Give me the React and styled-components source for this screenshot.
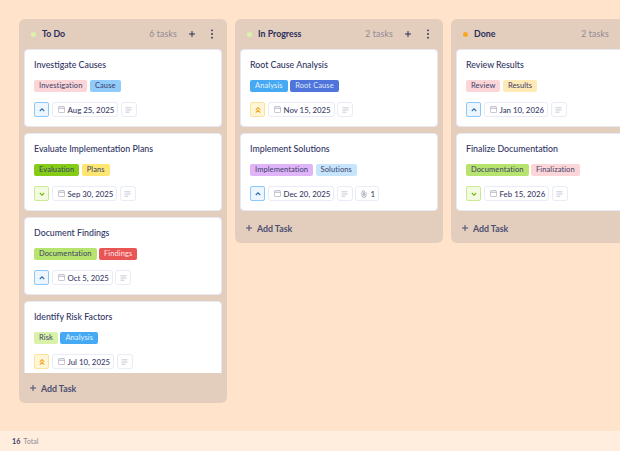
import React from "react";
import styled, { createGlobalStyle } from "styled-components";

const Global = createGlobalStyle`
  html, body { margin: 0; padding: 0; }
  body { font-family: "Lato", "Liberation Sans", sans-serif; background: #ffe3cb; }
  * { box-sizing: border-box; }
`;

const Page = styled.div`
  width: 620px; height: 451px; display: flex; flex-direction: column; overflow: hidden; background: #ffe3cb;
`;
const Board = styled.div`
  flex: 1; min-height: 0; display: flex; align-items: flex-start; gap: 8px; padding: 19px 0 0 19px; overflow: hidden;
`;
const Column = styled.section`
  flex: 0 0 208px; max-height: 384px; display: flex; flex-direction: column; background: #e3cdbd; border-radius: 6px; padding: 0 5px;
`;
const ColumnHeader = styled.header`
  height: 30px; flex: none; display: flex; align-items: center; padding: 0 5px 0 7px; color: #2b2f5b;
`;
const Dot = styled.span`
  width: 5px; height: 5px; border-radius: 50%; background: ${p => p.$color}; margin-right: 6px;
`;
const ColumnTitle = styled.h2`
  margin: 0 0 1px; font-size: 8.8px; font-weight: 700; flex: 1; color: #2b2f5b;
`;
const Count = styled.span`
  font-size: 8.6px; color: #8d8a94; margin-right: 10px; letter-spacing: .2px; margin-bottom: 1px;
`;
const HeaderIcon = styled.svg`
  width: 10px; height: 10px; flex: none; margin-left: ${p => p.$ml || 0}px; margin-bottom: 1px; color: #2b2f5b;
`;
const Cards = styled.div`
  flex: 0 1 auto; min-height: 0; overflow: hidden; display: flex; flex-direction: column; gap: 6px; padding-bottom: 2px;
`;
const Card = styled.article`
  flex: none; height: 78px; background: #fff; border: 1px solid #e6e8f6; border-radius: 4px; padding: 9px 9px 0;
`;
const CardTitle = styled.h3`
  margin: 0; height: 11px; font-size: 8.8px; line-height: 11px; font-weight: 500; color: #2f3463; white-space: nowrap;
`;
const Tags = styled.div`
  display: flex; gap: 2.5px; margin-top: 10px;
`;
const Tag = styled.span`
  height: 12px; padding: 0 5px; border-radius: 2px; font-size: 7.5px; line-height: 12px; font-weight: 400; white-space: nowrap; letter-spacing: .1px;
  background: ${p => p.$bg}; color: ${p => p.$fg || "#3a3e68"};
`;
const Meta = styled.div`
  display: flex; gap: 2.5px; margin-top: 10px;
`;
const Chip = styled.span`
  height: 15px; display: inline-flex; align-items: center; gap: 3px; padding: 0 3px 0 5px; border: 1px solid #e9ebf7; border-radius: 3px;
  background: #fff; font-size: 7.85px; font-weight: 500; color: #3a3e68; white-space: nowrap;
`;
const Priority = styled.span`
  width: 15px; height: 15px; display: inline-flex; align-items: center; justify-content: center; border-radius: 2px;
  border: 1px solid ${p => p.$border}; background: ${p => p.$bg}; color: ${p => p.$color};
`;
const Lines = styled.span`
  width: 16px; height: 15px; display: inline-flex; align-items: center; justify-content: center; border: 1px solid #e9ebf7; border-radius: 3px; color: #b9bbca;
`;
const AddRow = styled.div`
  height: 30px; flex: none; display: flex; align-items: center; gap: 3px; padding-left: 4px; font-size: 8.8px; font-weight: 700; color: #4a4d70;
`;
const Footer = styled.footer`
  height: 20px; flex: none; display: flex; align-items: center; gap: 3px; padding-left: 12px; background: #ffeddd; font-size: 7.2px; color: #8f8e9e;
`;
const FooterNum = styled.b`
  font-weight: 700; color: #3a3e68;
`;

const Plus = ({ ml }) => (
  <HeaderIcon $ml={ml} viewBox="0 0 10 10" fill="none" stroke="currentColor" strokeWidth="1"><path d="M5 2v6M2 5h6" /></HeaderIcon>
);
const Kebab = ({ ml }) => (
  <HeaderIcon $ml={ml} viewBox="0 0 10 10" fill="currentColor"><circle cx="5" cy="1.3" r=".9" /><circle cx="5" cy="5" r=".9" /><circle cx="5" cy="8.7" r=".9" /></HeaderIcon>
);
const Cal = () => (
  <svg width="7" height="7" viewBox="0 0 7 7" fill="none" stroke="#a9abbd" strokeWidth=".7"><rect x=".4" y=".7" width="6.2" height="5.9" rx=".7" /><path d="M.4 2.4h6.2M2 .1v1.2M5 .1v1.2" /></svg>
);
const LinesIcon = () => (
  <svg width="7" height="6" viewBox="0 0 7 6" fill="none" stroke="currentColor" strokeWidth=".8"><path d="M.5 .8h6M.5 3h6M.5 5.2h3.8" /></svg>
);
const Clip = () => (
  <svg width="6" height="8" viewBox="0 0 6 8" fill="none" stroke="#a9abbd" strokeWidth=".9"><path d="M5 2.5v3a2 2 0 0 1-4 0V2a1.3 1.3 0 0 1 2.6 0v3.2a.6.6 0 0 1-1.2 0V2.5" /></svg>
);

const PRIORITY = {
  up: { border: "#8cc8f8", bg: "#edf6fe", color: "#2f6fb0", d: "M1.8 5L4 2.8 6.2 5" },
  down: { border: "#c8eb94", bg: "#f2fbdf", color: "#74b81e", d: "M1.8 3L4 5.2 6.2 3" },
  high: { border: "#fde39a", bg: "#fff6d8", color: "#f5a623", d: "M1.8 3.8L4 1.6 6.2 3.8M1.8 6.6L4 4.4 6.2 6.6" },
};
const PriorityBadge = ({ level }) => {
  const p = PRIORITY[level];
  return (
    <Priority $border={p.border} $bg={p.bg} $color={p.color}>
      <svg width="8" height="8" viewBox="0 0 8 8" fill="none" stroke="currentColor" strokeWidth="1.1"><path d={p.d} /></svg>
    </Priority>
  );
};

const T = {
  pink: { $bg: "#fcd5d8" }, sky: { $bg: "#90cbfa" }, green: { $bg: "#84cc16" }, yellow: { $bg: "#ffe672" },
  lime: { $bg: "#b7e36f" }, red: { $bg: "#e95454", $fg: "#fde8e8" }, pale: { $bg: "#d8f2a9" }, blue: { $bg: "#45a9f4", $fg: "#e4f3fe" },
  indigo: { $bg: "#4f74dc", $fg: "#dfe7fb" }, purple: { $bg: "#e0b4f8" }, ice: { $bg: "#c6e5fc" }, cream: { $bg: "#ffe9b5" },
};

const columns = [
  { title: "To Do", dot: "#d9f2a9", count: "6 tasks", cards: [
    { title: "Investigate Causes", tags: [["Investigation", T.pink], ["Cause", T.sky]], p: "up", date: "Aug 25, 2025" },
    { title: "Evaluate Implementation Plans", tags: [["Evaluation", T.green], ["Plans", T.yellow]], p: "down", date: "Sep 30, 2025" },
    { title: "Document Findings", tags: [["Documentation", T.lime], ["Findings", T.red]], p: "up", date: "Oct 5, 2025" },
    { title: "Identify Risk Factors", tags: [["Risk", T.pale], ["Analysis", T.blue]], p: "high", date: "Jul 10, 2025" },
  ] },
  { title: "In Progress", dot: "#d9f2a9", count: "2 tasks", cards: [
    { title: "Root Cause Analysis", tags: [["Analysis", T.blue], ["Root Cause", T.indigo]], p: "high", date: "Nov 15, 2025" },
    { title: "Implement Solutions", tags: [["Implementation", T.purple], ["Solutions", T.ice]], p: "up", date: "Dec 20, 2025", clip: 1 },
  ] },
  { title: "Done", dot: "#f9a825", count: "2 tasks", cards: [
    { title: "Review Results", tags: [["Review", T.pink], ["Results", T.cream]], p: "up", date: "Jan 10, 2026" },
    { title: "Finalize Documentation", tags: [["Documentation", T.lime], ["Finalization", T.pink]], p: "down", date: "Feb 15, 2026" },
  ] },
];

export default function App() {
  return (
    <Page>
      <Global />
      <Board>
        {columns.map(col => (
          <Column key={col.title}>
            <ColumnHeader>
              <Dot $color={col.dot} />
              <ColumnTitle>{col.title}</ColumnTitle>
              <Count>{col.count}</Count>
              <Plus />
              <Kebab ml={10} />
            </ColumnHeader>
            <Cards>
              {col.cards.map(card => (
                <Card key={card.title}>
                  <CardTitle>{card.title}</CardTitle>
                  <Tags>{card.tags.map(([label, s]) => <Tag key={label} {...s}>{label}</Tag>)}</Tags>
                  <Meta>
                    <PriorityBadge level={card.p} />
                    <Chip><Cal />{card.date}</Chip>
                    <Lines><LinesIcon /></Lines>
                    {card.clip && <Chip><Clip />{card.clip}</Chip>}
                  </Meta>
                </Card>
              ))}
            </Cards>
            <AddRow>
              <svg width="10" height="10" viewBox="0 0 10 10" fill="none" stroke="currentColor" strokeWidth="1"><path d="M2 5h6M5 2v6" /></svg>
              Add Task
            </AddRow>
          </Column>
        ))}
      </Board>
      <Footer><FooterNum>16</FooterNum> Total</Footer>
    </Page>
  );
}
